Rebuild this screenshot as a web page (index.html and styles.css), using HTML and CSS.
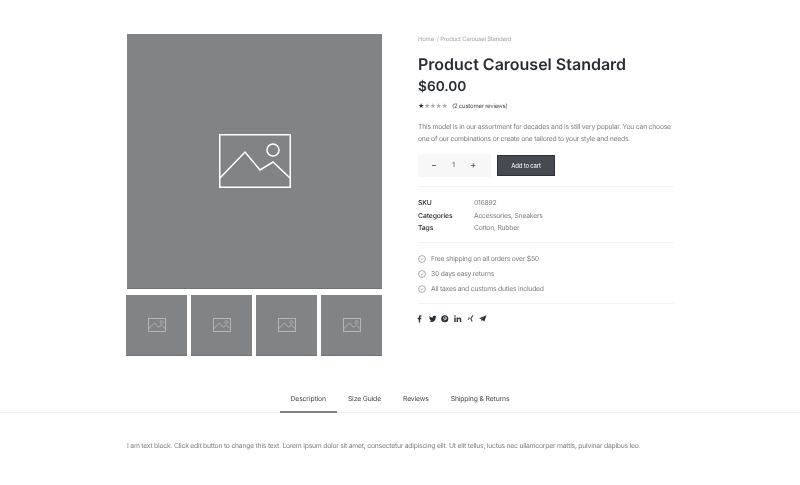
FILE: index.html
```html
<!DOCTYPE html>
<html lang="en">

<head>
    <meta charset="UTF-8">
    <meta name="viewport" content="width=device-width, initial-scale=1.0">
    <title>Product Carousel Standard</title>
    <link rel="stylesheet" href="styles.css">
</head>

<body>
    <svg class="defs" width="0" height="0">
        <symbol id="ph" viewBox="0 0 72 54">
            <rect x="0.75" y="0.75" width="70.5" height="52.5" fill="none" stroke="currentColor" stroke-width="1.5"/>
            <circle cx="54" cy="16" r="6" fill="none" stroke="currentColor" stroke-width="1.5"/>
            <path d="M1 44 L26 18 L41 36 L54 28 L71 44" fill="none" stroke="currentColor" stroke-width="1.5"/>
        </symbol>
        <symbol id="ph-s" viewBox="0 0 18 14">
            <rect x="0.5" y="0.5" width="17" height="13" fill="none" stroke="currentColor" stroke-width="1"/>
            <circle cx="13.5" cy="4.2" r="1.5" fill="none" stroke="currentColor" stroke-width="0.8"/>
            <path d="M.5 11 L6.500 4.800 L10.200 9.200 L13.400 7.200 L17.500 11" fill="none" stroke="currentColor" stroke-width="0.9"/>
        </symbol>
        <symbol id="chk" viewBox="0 0 8 8">
            <circle cx="4" cy="4" r="3.4" fill="none" stroke="currentColor" stroke-width="0.6"/>
            <path d="M2.600 3.700 L3.700 4.800 L5.400 3.300" fill="none" stroke="currentColor" stroke-width="0.6"/>
        </symbol>
    </svg>

    <div class="product">
        <div class="gallery">
            <div class="main-img">
                <svg class="ph-big"><use href="#ph"/></svg>
            </div>
            <div class="thumbs">
                <div class="thumb"><svg class="ph-small"><use href="#ph-s"/></svg></div>
                <div class="thumb"><svg class="ph-small"><use href="#ph-s"/></svg></div>
                <div class="thumb"><svg class="ph-small"><use href="#ph-s"/></svg></div>
                <div class="thumb"><svg class="ph-small"><use href="#ph-s"/></svg></div>
            </div>
        </div>

        <div class="info">
            <div class="crumbs">Home &nbsp;/&nbsp;Product Carousel Standard</div>
            <h1>Product Carousel Standard</h1>
            <div class="price">$60.00</div>
            <div class="rating">
                <span class="stars"><b>★</b>★★★★</span>
                <span class="reviews">(2 customer reviews)</span>
            </div>
            <p class="desc">This model is in our assortment for decades and is still very popular. You can choose one of our combinations or create one tailored to your style and needs.</p>
            <div class="buy">
                <div class="qty"><span>−</span><span class="num">1</span><span>+</span></div>
                <button class="add">Add to cart</button>
            </div>
            <div class="meta">
                <div class="meta-row"><span class="label">SKU</span><span>016892</span></div>
                <div class="meta-row"><span class="label">Categories</span><span>Accessories, Sneakers</span></div>
                <div class="meta-row"><span class="label">Tags</span><span>Cotton, Rubber</span></div>
            </div>
            <ul class="perks">
                <li><svg class="chk"><use href="#chk"/></svg>Free shipping on all orders over $50</li>
                <li><svg class="chk"><use href="#chk"/></svg>30 days easy returns</li>
                <li><svg class="chk"><use href="#chk"/></svg>All taxes and customs duties included</li>
            </ul>
            <div class="share">
                <svg viewBox="0 0 8 8"><path d="M3 8V4.400H1.800V3H3V2C3 .8 3.700 .2 4.800 .2H5.800V1.500H5.100C4.600 1.500 4.400 1.800 4.400 2.200V3H5.700L5.500 4.400H4.400V8Z"/></svg>
                <svg viewBox="0 0 8 8"><path d="M8 1.500C7.700 1.600 7.400 1.700 7.100 1.700 7.400 1.500 7.700 1.200 7.800 .8 7.500 1 7.100 1.100 6.800 1.200 6.100 .4 4.600 .6 4.100 1.600 3.900 2 3.900 2.400 4 2.800 2.700 2.700 1.400 2.100 .6 1 .1 1.800 .3 2.800 1.100 3.300.8 3.300.6 3.200.3 3.100.3 3.900.9 4.600 1.600 4.800 1.400 4.900 1.100 4.900.9 4.800 1.100 5.500 1.700 5.900 2.400 6 1.700 6.500.8 6.800 0 6.700 3.500 8.800 7.400 6.500 7.200 2.400 7.500 2.200 7.800 1.900 8 1.500Z"/></svg>
                <svg viewBox="0 0 8 8"><path fill-rule="evenodd" d="M4 .2A3.800 3.800 0 1 0 4 7.800 3.800 3.800 0 0 0 4 .2ZM4.200 1.600C5.400 1.600 6.100 2.400 6.100 3.300 6.100 4.400 5.400 5.200 4.500 5.200 4.200 5.200 3.900 5 3.800 4.800L3.500 6.100 2.800 6.800 3.200 4.500C3 4.200 3.100 3.500 3.500 3.500 4 3.500 3.700 4.300 3.700 4.500 3.800 4.800 4.200 4.700 4.500 4.500 5.100 4 5.200 2.300 4 2.200 2.800 2.100 2.300 3.300 2.800 4L2.500 4.500C1.500 3.500 2.300 1.600 4.200 1.600Z"/></svg>
                <svg viewBox="0 0 8 8"><path d="M.3 2.700H1.800V7.500H.3ZM1 .3A.85 .85 0 1 1 1 2 .85 .85 0 0 1 1 .3ZM2.800 2.700H4.200V3.400C4.500 2.900 5 2.600 5.700 2.600 7.200 2.600 7.700 3.500 7.700 4.900V7.500H6.200V5.200C6.200 4.500 6 4 5.400 4 4.700 4 4.300 4.500 4.300 5.200V7.500H2.800Z"/></svg>
                <svg viewBox="0 0 8 8"><path d="M1.300 2.300H2.400L3 3.300 2 5H.9L1.900 3.300ZM5.700 .2H6.900L4.700 4.100 6.100 7H4.900L3.500 4.100Z"/></svg>
                <svg viewBox="0 0 8 8"><path fill-rule="evenodd" d="M7.900 .3 .2 3.400 2.300 4.400 2.600 6.800 3.800 5.300 5.700 6.900ZM6.300 1.500 3 4.300 3 5.300 2.800 4.100Z"/></svg>
            </div>
        </div>
    </div>

    <div class="tabs">
        <a class="tab active">Description</a>
        <a class="tab">Size Guide</a>
        <a class="tab">Reviews</a>
        <a class="tab">Shipping &amp; Returns</a>
    </div>
    <p class="tab-text">I am text block. Click edit button to change this text. Lorem ipsum dolor sit amet, consectetur adipiscing elit. Ut elit tellus, luctus nec ullamcorper mattis, pulvinar dapibus leo.</p>
</body>

</html>
```

FILE: styles.css
```css
body,
html {
    margin: 0;
    padding: 0;
}

* {
    box-sizing: border-box;
}

body {
    font-family: Inter, "Liberation Sans", sans-serif;
    font-size: 6.800px;
    letter-spacing: -.225px;
    color: #7b7f82;
    background: #fff;
    overflow: hidden;
    text-rendering: geometricPrecision;
    filter: blur(.3px);
}

.defs {
    position: absolute;
}

.product {
    display: flex;
    gap: 36px;
    padding: 34px 126px 0;
}

/* gallery */
.gallery {
    width: 256px;
    flex: none;
}

.main-img {
    width: 255px;
    height: 255px;
    margin-left: 1px;
    background: #808486;
    border-bottom: 1px solid #6f7375;
    display: flex;
    align-items: center;
    justify-content: center;
}

.ph-big {
    width: 72px;
    height: 54px;
    color: #fff;
}

.thumbs {
    display: grid;
    grid-template-columns: repeat(4, 61px);
    justify-content: space-between;
    margin-top: 6px;
}

.thumb {
    height: 61px;
    background: #808486;
    border-bottom: 1px solid #6f7375;
    display: flex;
    align-items: center;
    justify-content: center;
}

.ph-small {
    width: 18px;
    height: 14px;
    color: #b4b7b8;
}

/* info */
.info {
    width: 256px;
    flex: none;
}

.crumbs {
    padding-top: 1px;
    font-size: 6px;
    line-height: 10px;
    color: #a4a7a9;
}

h1 {
    margin: 7px 0 0;
    font-size: 16px;
    line-height: 24px;
    font-weight: 600;
    letter-spacing: 0;
    color: #272d33;
}

.price {
    font-size: 13.700px;
    line-height: 22px;
    font-weight: 600;
    letter-spacing: 0;
    color: #272d33;
}

.rating {
    display: flex;
    align-items: center;
    height: 12px;
    margin-top: 2px;
}

.stars {
    width: 34px;
    font-size: 6px;
    letter-spacing: -.4px;
    color: #a9acae;
}

.stars b {
    color: #272d33;
    font-weight: 400;
}

.reviews {
    font-size: 6px;
    color: #4a4f53;
}

.desc {
    margin: 9px 0 0;
    line-height: 12px;
}

.buy {
    display: flex;
    align-items: center;
    gap: 6px;
    margin-top: 8.500px;
}

.qty {
    width: 73px;
    height: 23px;
    padding: 0 15px 0 13px;
    background: #f7f7f7;
    color: #3f4549;
    display: flex;
    align-items: center;
    justify-content: space-between;
    font-size: 9px;
}

.num {
    font-size: 6.500px;
}

.add {
    width: 58px;
    height: 21px;
    padding: 0;
    border: 1px solid #2b3136;
    background: #454b51;
    color: #fff;
    font-family: inherit;
    font-size: 6px;
    letter-spacing: -.2px;
}

.meta {
    margin-top: 9px;
    padding: 10px 0 8px;
    border-top: 1px solid #f2f2f2;
    border-bottom: 1px solid #f2f2f2;
}

.meta-row {
    display: flex;
    height: 12.600px;
    align-items: center;
}

.label {
    width: 56px;
    color: #272d33;
    font-weight: 500;
    letter-spacing: -.1px;
}

.perks {
    list-style: none;
    margin: 0;
    padding: 8px 0 7px;
    border-bottom: 1px solid #f2f2f2;
}

.perks li {
    display: flex;
    align-items: center;
    height: 15px;
}

.chk {
    width: 8px;
    height: 8px;
    margin-right: 5px;
    color: #6f7478;
}

.share {
    display: flex;
    gap: 5.200px;
    margin: 11px 0 0 -2px;
}

.share svg {
    width: 7.500px;
    height: 7.500px;
    fill: #272d33;
}

/* tabs */
.tabs {
    display: flex;
    justify-content: center;
    margin-top: 27px;
    border-bottom: 1px solid #f0f0f0;
}

.tab {
    height: 30px;
    padding: 0 11px;
    margin-bottom: -1px;
    display: flex;
    align-items: center;
    color: #3f4549;
    letter-spacing: -.13px;
}

.tab.active {
    box-shadow: inset 0 -2px 0 #808486;
}

.tab-text {
    margin: 27px 0 0 127px;
    line-height: 12px;
    white-space: nowrap;
}
```
